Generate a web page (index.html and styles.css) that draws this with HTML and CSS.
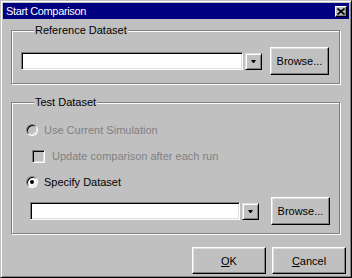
FILE: index.html
```html
<!DOCTYPE html>
<html lang="en">
<head>
  <meta charset="UTF-8">
  <title>Start Comparison</title>
  <link rel="stylesheet" href="styles.css">
</head>
<body>

  <div class="window">
    <div class="titlebar">
      <span class="title">Start Comparison</span>
      <button class="close-btn" aria-label="Close">
        <svg width="8" height="7" viewBox="0 0 8 7"><path d="M0.5,0.5 L7.5,6.5 M7.5,0.5 L0.5,6.5" stroke="#000" stroke-width="1.7" fill="none"/></svg>
      </button>
    </div>

    <div class="dialog-body">
      <fieldset class="group">
        <legend>Reference Dataset</legend>
        <div class="dataset-row ref-row">
          <div class="edit ref-edit"></div>
          <button class="drop-btn"><span class="arrow"></span></button>
          <button class="btn browse">Browse...</button>
        </div>
      </fieldset>

      <fieldset class="group test-group">
        <legend>Test Dataset</legend>
        <div class="test-content">
          <div class="option disabled">
            <span class="radio"></span>
            <span>Use Current Simulation</span>
          </div>
          <div class="option sub disabled">
            <span class="check"></span>
            <span>Update comparison after each run</span>
          </div>
          <div class="option">
            <span class="radio checked"></span>
            <span>Specify Dataset</span>
          </div>
          <div class="dataset-row test-row">
            <div class="edit test-edit"></div>
            <button class="drop-btn"><span class="arrow"></span></button>
            <button class="btn browse">Browse...</button>
          </div>
        </div>
      </fieldset>

      <div class="footer">
        <button class="btn action"><u>O</u>K</button>
        <button class="btn action"><u>C</u>ancel</button>
      </div>
    </div>
  </div>

</body>
</html>
```

FILE: styles.css
```css
body {
  margin: 0;
  background: #c0c0c0;
  font-family: "Liberation Sans", Arial, sans-serif;
  font-size: 11px;
  color: #000;
}

.window {
  width: 352px;
  height: 278px;
  box-sizing: border-box;
  background: #c0c0c0;
  border: 1px solid;
  border-color: #c0c0c0 #000 #000 #c0c0c0;
  box-shadow: inset 1px 1px #fff, inset -1px -1px #808080;
  padding: 2px;
}

.titlebar {
  height: 16px;
  background: #000080;
  color: #fff;
  display: flex;
  align-items: center;
  padding: 0 2px 0 3px;
}

.title {
  flex: 1;
  line-height: 16px;
  letter-spacing: -0.35px;
}

.close-btn {
  width: 12px;
  height: 11px;
  padding: 0;
  margin: 0;
  background: #c0c0c0;
  border: 1px solid;
  border-color: #fff #000 #000 #fff;
  box-shadow: inset -1px -1px #808080;
  display: flex;
  align-items: center;
  justify-content: center;
}

.close-btn svg {
  display: block;
}

.dialog-body {
  padding: 5px 3px 0 8px;
}

.group {
  margin: 0 6px 0 0;
  padding: 0;
  min-width: 0;
  border: 1px solid #808080;
  box-shadow: inset 1px 1px #fff, 1px 1px #fff;
}

.group legend {
  margin-left: 22px;
  padding: 0 1px;
  line-height: 13px;
  background: #c0c0c0;
}

.test-group {
  margin-top: 12px;
}

.test-content {
  padding: 8px 0 8px 14px;
}

.dataset-row {
  display: flex;
  align-items: center;
}

.ref-row {
  padding: 10px 0 8px 9px;
}

.test-row {
  margin-top: 2px;
  padding-left: 4px;
}

.edit {
  height: 18px;
  box-sizing: border-box;
  background: #fff;
  border: 1px solid;
  border-color: #808080 #fff #fff #808080;
  box-shadow: inset 1px 1px #000, inset -1px -1px #dfdfdf;
}

.ref-edit {
  width: 222px;
}

.test-edit {
  width: 210px;
}

.drop-btn {
  width: 17px;
  height: 17px;
  box-sizing: border-box;
  margin: 0 0 0 2px;
  padding: 0;
  background: #c0c0c0;
  border: 1px solid;
  border-color: #dfdfdf #000 #000 #dfdfdf;
  box-shadow: inset 1px 1px #fff, inset -1px -1px #808080;
  display: flex;
  align-items: center;
  justify-content: center;
}

.arrow {
  width: 1px;
  height: 0;
  border-left: 2px solid transparent;
  border-right: 2px solid transparent;
  border-top: 3px solid #000;
}

.btn {
  font-family: "Liberation Sans", Arial, sans-serif;
  font-size: 11px;
  color: #000;
  background: #c0c0c0;
  box-sizing: border-box;
  padding: 0;
  border: 1px solid;
  border-color: #fff #000 #000 #fff;
  box-shadow: inset -1px -1px #808080, inset 1px 1px #dfdfdf;
}

.browse {
  width: 59px;
  height: 28px;
  margin-left: 8px;
}

.test-row .browse {
  margin-left: 12px;
}

.option {
  height: 26px;
  display: flex;
  align-items: center;
  gap: 6px;
}

.option.sub {
  padding-left: 6px;
  gap: 7px;
}

.option.disabled {
  color: #808080;
}

.radio {
  width: 12px;
  height: 12px;
  box-sizing: border-box;
  border-radius: 50%;
  border: 1px solid;
  border-color: #808080 #fff #fff #808080;
  box-shadow: inset 1px 1px #000, inset -1px -1px #dfdfdf;
  background: #c0c0c0;
  display: flex;
  align-items: center;
  justify-content: center;
}

.radio.checked {
  background: #fff;
}

.radio.checked::after {
  content: "";
  width: 4px;
  height: 4px;
  border-radius: 50%;
  background: #000;
}

.check {
  width: 13px;
  height: 13px;
  box-sizing: border-box;
  border: 1px solid;
  border-color: #808080 #fff #fff #808080;
  box-shadow: inset 1px 1px #000, inset -1px -1px #dfdfdf;
  background: #c0c0c0;
}

.footer {
  display: flex;
  justify-content: flex-end;
  gap: 6px;
  margin-top: 13px;
}

.action {
  width: 74px;
  height: 27px;
}
```
